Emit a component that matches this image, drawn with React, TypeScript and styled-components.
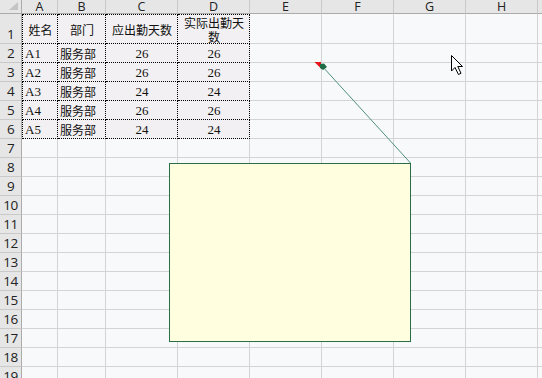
import React from "react";
import styled, { createGlobalStyle, css } from "styled-components";

const Global = createGlobalStyle`
  html, body { margin: 0; padding: 0; background: #f8f9fa; }
  body { width: 542px; height: 378px; overflow: hidden; }
  * { box-sizing: border-box; }
`;

const COLS: { key: string; w: number }[] = [
  { key: "A", w: 36 },
  { key: "B", w: 48 },
  { key: "C", w: 72 },
  { key: "D", w: 72 },
  { key: "E", w: 72 },
  { key: "F", w: 72 },
  { key: "G", w: 72 },
  { key: "H", w: 72 },
  { key: "I", w: 72 },
];

const Sheet = styled.div`
  position: relative;
  width: 542px;
  height: 378px;
  overflow: hidden;
  background: #f8f9fa;
  display: flex;
  flex-direction: column;
`;

const Row = styled.div<{ $h: number }>`
  display: flex;
  flex: none;
  height: ${(p) => p.$h}px;
`;

const Corner = styled.div`
  width: 22px;
  height: 100%;
  flex: none;
  background: #e6e6e6;
  border-right: 1px solid #ababab;
  border-bottom: 1px solid #ababab;
  display: flex;
  align-items: flex-end;
  justify-content: flex-end;
  padding: 0 3px 3px 0;
`;

const ColHead = styled.div<{ $w: number }>`
  width: ${(p) => p.$w}px;
  flex: none;
  height: 100%;
  background: #e6e6e6;
  border-right: 1px solid #c9c9c9;
  border-bottom: 1px solid #ababab;
  font-family: "Open Sans", "Noto Sans", sans-serif;
  font-size: 12.5px;
  line-height: 13px;
  color: #222;
  text-align: center;
  overflow: visible;
`;

const RowHead = styled.div`
  width: 22px;
  flex: none;
  height: 100%;
  background: #e6e6e6;
  border-right: 1px solid #ababab;
  border-bottom: 1px solid #c9c9c9;
  font-family: "Open Sans", "Noto Sans", sans-serif;
  font-size: 13.5px;
  line-height: 16px;
  color: #222;
  display: flex;
  align-items: flex-end;
  justify-content: center;
  padding-bottom: 1px;
  letter-spacing: -0.5px;
`;

const Cell = styled.div<{
  $w: number;
  $table?: boolean;
  $top?: boolean;
  $left?: boolean;
  $align?: "left" | "center";
  $serif?: boolean;
}>`
  width: ${(p) => p.$w}px;
  flex: none;
  height: 100%;
  border-right: 1px solid #d4d4d4;
  border-bottom: 1px solid #d4d4d4;
  display: flex;
  align-items: center;
  justify-content: ${(p) => (p.$align === "left" ? "flex-start" : "center")};
  text-align: center;
  padding: 2px 1px 0 2px;
  color: #111;
  font-family: ${(p) =>
    p.$serif
      ? `"Liberation Serif", "Noto Sans CJK SC", serif`
      : `"Noto Sans CJK SC", sans-serif`};
  font-size: ${(p) => (p.$serif ? 13 : 12)}px;
  line-height: 14px;
  white-space: normal;
  ${(p) =>
    p.$table &&
    css`
      background: #f2f0f2;
      border-right: 1px dotted #000;
      border-bottom: 1px dotted #000;
    `}
  ${(p) =>
    p.$top &&
    css`
      border-top: 1px dotted #000;
    `}
  ${(p) =>
    p.$left &&
    css`
      border-left: 1px dotted #000;
    `}
`;

const Note = styled.div`
  position: absolute;
  left: 169px;
  top: 163px;
  width: 242px;
  height: 179px;
  background: #ffffe0;
  border: 1px solid #2a6e48;
`;

const Overlay = styled.svg`
  position: absolute;
  left: 0;
  top: 0;
  pointer-events: none;
`;

type Item = { t: string; align?: "left" | "center"; serif?: boolean };

const header: Item[] = [
  { t: "姓名" },
  { t: "部门" },
  { t: "应出勤天数" },
  { t: "实际出勤天数" },
];

const data: [string, string, string, string][] = [
  ["A1", "服务部", "26", "26"],
  ["A2", "服务部", "26", "26"],
  ["A3", "服务部", "24", "24"],
  ["A4", "服务部", "26", "26"],
  ["A5", "服务部", "24", "24"],
];

export default function App() {
  const rows: { n: number; h: number; items?: Item[] }[] = [];
  rows.push({ n: 1, h: 30, items: header });
  data.forEach((d, i) =>
    rows.push({
      n: i + 2,
      h: 19,
      items: [
        { t: d[0], align: "left", serif: true },
        { t: d[1], align: "left" },
        { t: d[2], serif: true },
        { t: d[3], serif: true },
      ],
    })
  );
  for (let n = 7; n <= 20; n++) rows.push({ n, h: 19 });

  return (
    <>
      <Global />
      <Sheet>
        <Row $h={14}>
          <Corner>
            <svg width="9" height="8" viewBox="0 0 9 8">
              <polygon points="9,0 9,8 0,8" fill="#c4c4c4" />
            </svg>
          </Corner>
          {COLS.map((c) => (
            <ColHead key={c.key} $w={c.w}>
              {c.key}
            </ColHead>
          ))}
        </Row>
        {rows.map((r) => (
          <Row key={r.n} $h={r.h}>
            <RowHead>{r.n}</RowHead>
            {COLS.map((c, ci) => {
              const it = r.items && ci < 4 ? r.items[ci] : undefined;
              return (
                <Cell
                  key={c.key}
                  $w={c.w}
                  $table={!!it}
                  $top={!!it && r.n === 1}
                  $left={!!it && ci === 0}
                  $align={it?.align}
                  $serif={it?.serif}
                >
                  {it?.t}
                </Cell>
              );
            })}
          </Row>
        ))}
        <Note />
        <Overlay width="542" height="378" viewBox="0 0 542 378">
          <line
            x1="410.5"
            y1="163"
            x2="322"
            y2="66"
            stroke="#4f8f80"
            strokeWidth="1"
          />
          <polygon points="314.5,62 321,62 321,68.5" fill="#e8141b" />
          <polygon points="320,64 324,63.5 327,67 323,70 320,68" fill="#1f6b45" />
          <path
            d="M451.5 55.5 L451.5 71 L455 67.5 L458.5 74.5 L461 73.3 L457.8 66.5 L462.5 66.5 Z"
            fill="#ffffff"
            stroke="#000000"
            strokeWidth="1"
            strokeLinejoin="miter"
          />
        </Overlay>
      </Sheet>
    </>
  );
}
